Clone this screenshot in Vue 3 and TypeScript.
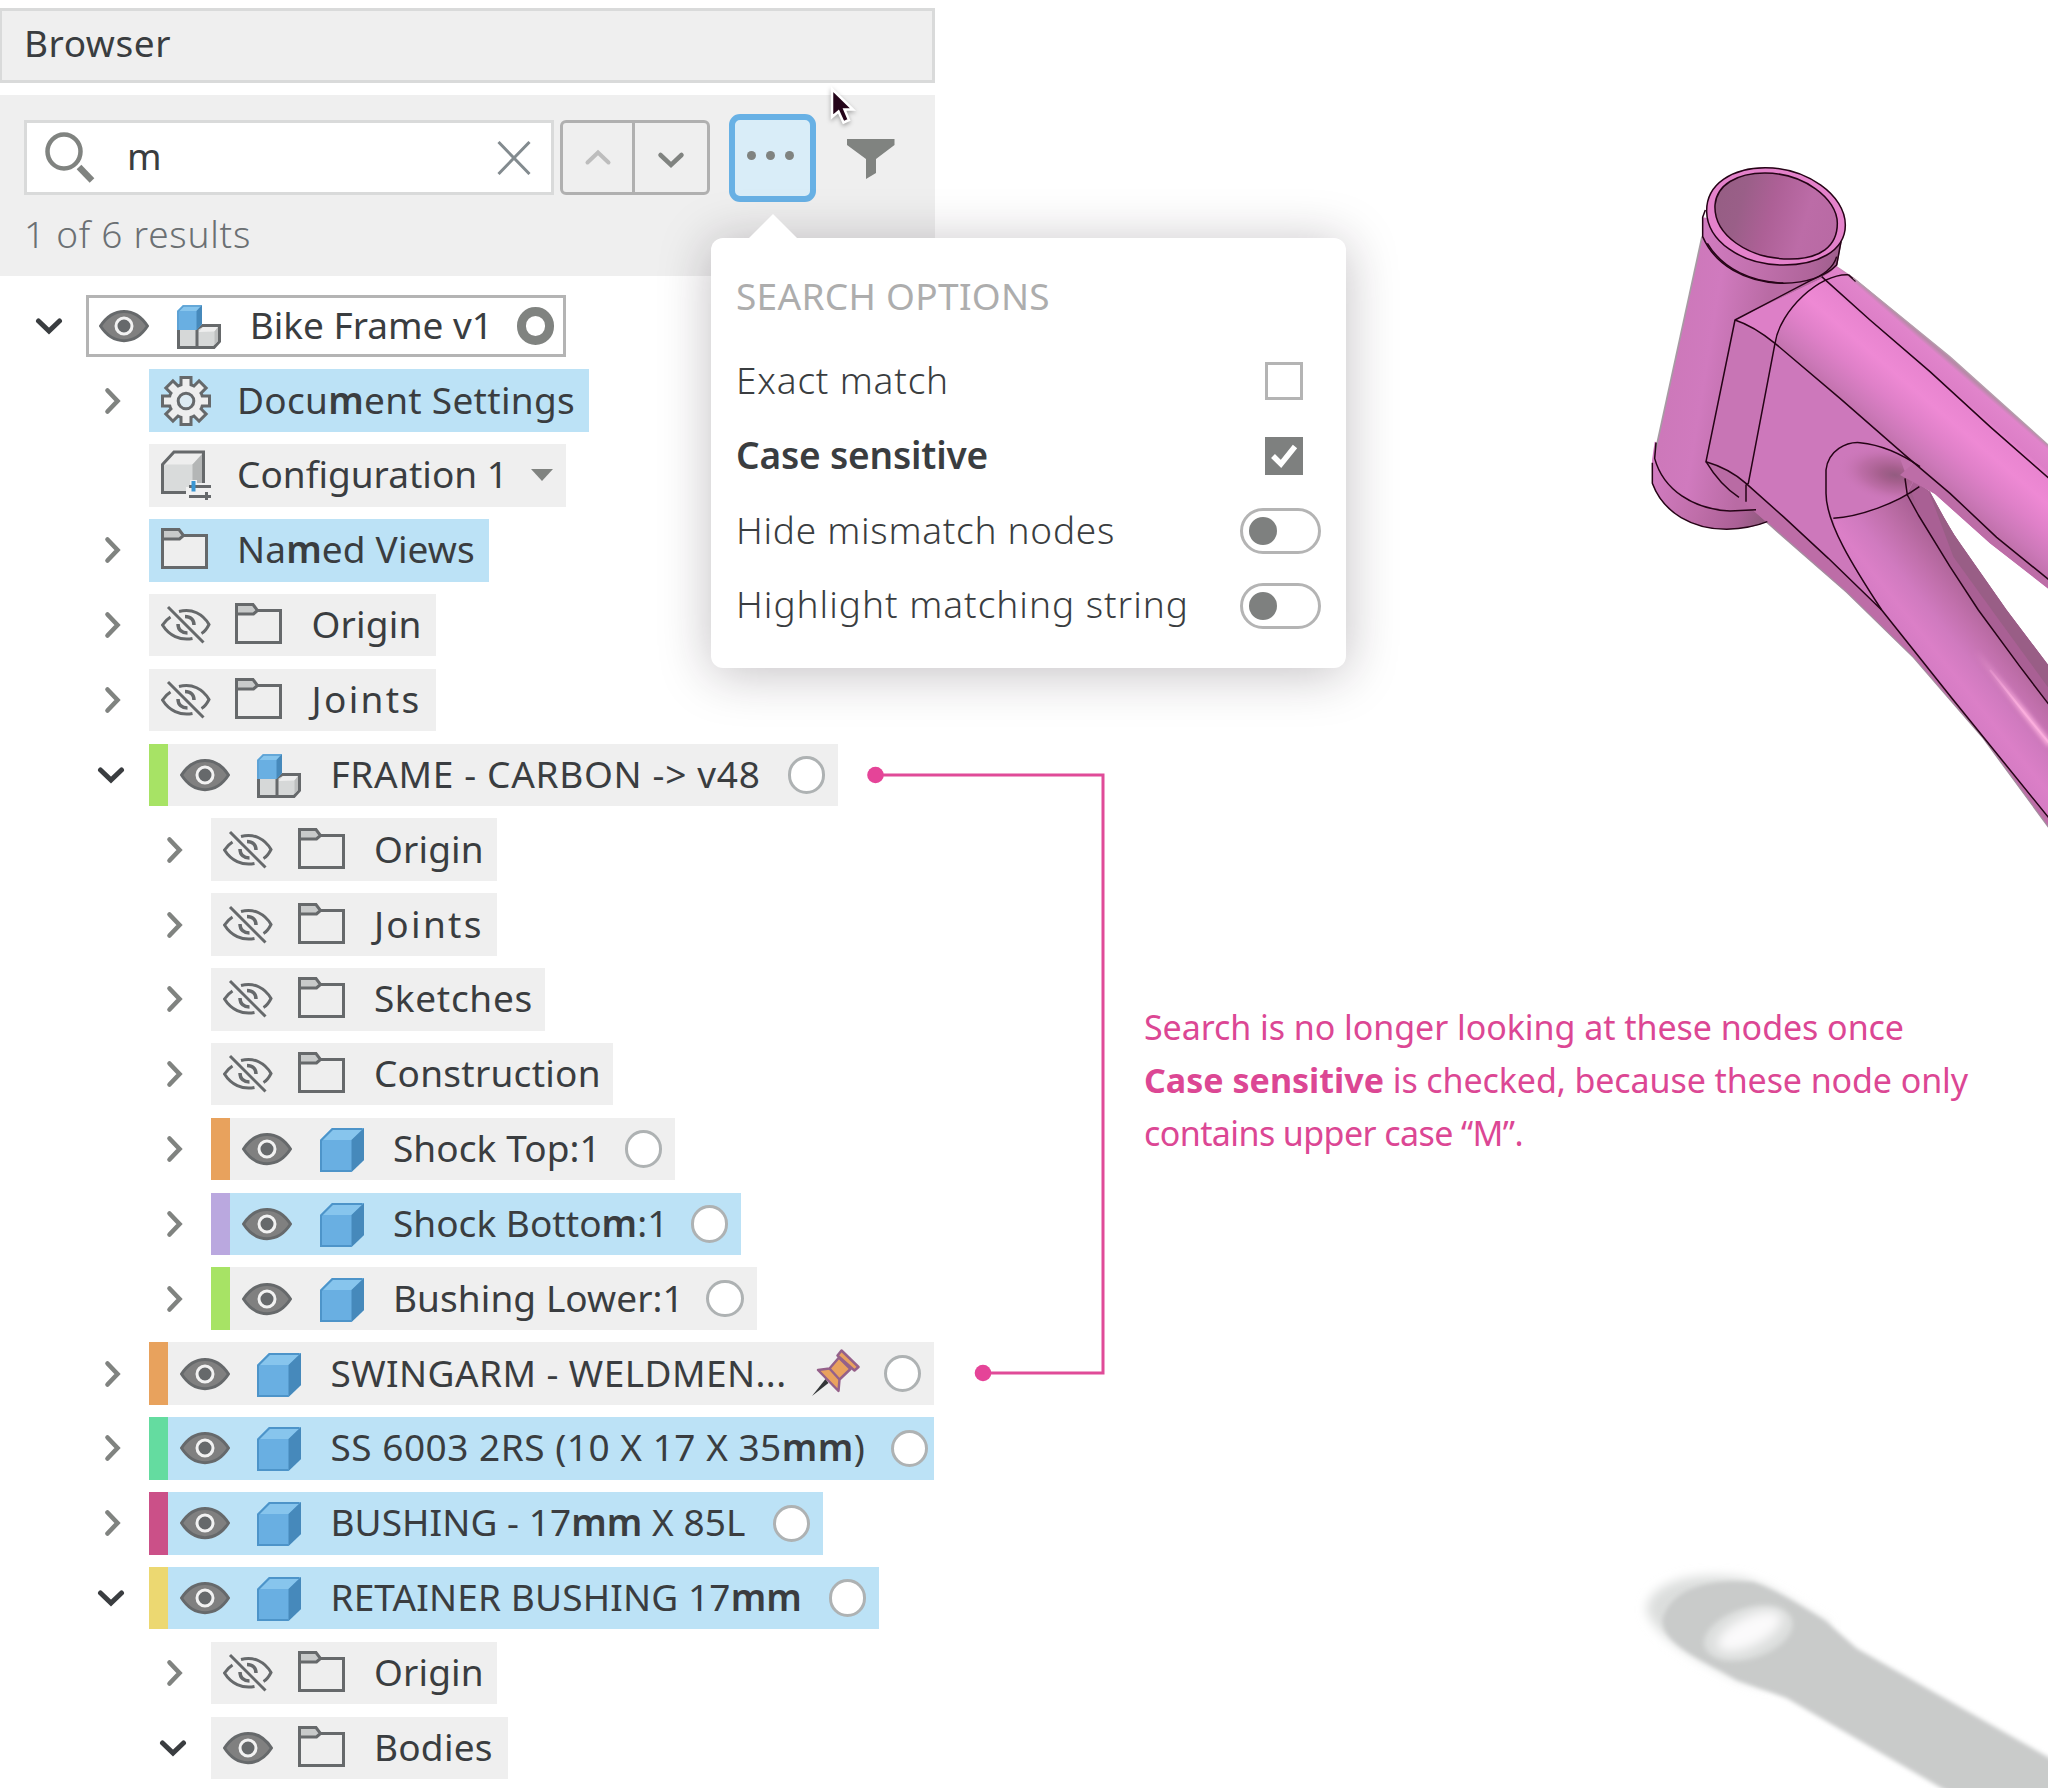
<script setup lang="ts">
import { computed } from 'vue'

type IconKind = 'assembly' | 'gear' | 'config' | 'folder' | 'cube'

interface TreeNode {
  level: number
  label: string
  textWidth: number
  width: number
  icon: IconKind
  open?: boolean
  leaf?: boolean
  eye?: 'on' | 'off'
  bar?: string
  match?: boolean
  radio?: boolean
  root?: boolean
  caret?: boolean
  pin?: boolean
  tight?: boolean
}

const nodes: TreeNode[] = [
  { level: 0, label: 'Bike Frame v1', textWidth: 243, width: 480, icon: 'assembly', open: true, eye: 'on', root: true },
  { level: 1, label: 'Docu*m*ent Settings', textWidth: 338, width: 440, icon: 'gear', match: true },
  { level: 1, label: 'Configuration 1', textWidth: 271, width: 417.5, icon: 'config', leaf: true, caret: true },
  { level: 1, label: 'Na*m*ed Views', textWidth: 238, width: 340.5, icon: 'folder', match: true },
  { level: 1, label: 'Origin', textWidth: 110, width: 287.5, icon: 'folder', eye: 'off' },
  { level: 1, label: 'Joints', textWidth: 110, width: 287.5, icon: 'folder', eye: 'off' },
  { level: 1, label: 'FRAME - CARBON -> v48', textWidth: 430, width: 689.5, icon: 'assembly', open: true, eye: 'on', bar: '#a7e365', radio: true },
  { level: 2, label: 'Origin', textWidth: 110, width: 286, icon: 'folder', eye: 'off' },
  { level: 2, label: 'Joints', textWidth: 110, width: 286, icon: 'folder', eye: 'off' },
  { level: 2, label: 'Sketches', textWidth: 159, width: 333.5, icon: 'folder', eye: 'off' },
  { level: 2, label: 'Construction', textWidth: 227, width: 401.5, icon: 'folder', eye: 'off' },
  { level: 2, label: 'Shock Top:1', textWidth: 208, width: 464, icon: 'cube', eye: 'on', bar: '#e8a25d', radio: true },
  { level: 2, label: 'Shock Botto*m*:1', textWidth: 275.5, width: 530, icon: 'cube', eye: 'on', bar: '#baa8df', match: true, radio: true },
  { level: 2, label: 'Bushing Lower:1', textWidth: 291, width: 545.5, icon: 'cube', eye: 'on', bar: '#a7e365', radio: true },
  { level: 1, label: 'SWINGARM - WELDMEN...', textWidth: 456, width: 785.5, icon: 'cube', eye: 'on', bar: '#e8a25d', radio: true, pin: true },
  { level: 1, label: 'SS 6003 2RS (10 X 17 X 35*mm*)', textWidth: 535, width: 785.5, icon: 'cube', eye: 'on', bar: '#64dca0', match: true, radio: true, tight: true },
  { level: 1, label: 'BUSHING - 17*mm* X 85L', textWidth: 415, width: 674.5, icon: 'cube', eye: 'on', bar: '#cb5088', match: true, radio: true },
  { level: 1, label: 'RETAINER BUSHING 17*mm*', textWidth: 471.5, width: 730.5, icon: 'cube', eye: 'on', bar: '#ecd871', open: true, match: true, radio: true },
  { level: 2, label: 'Origin', textWidth: 110, width: 286, icon: 'folder', eye: 'off' },
  { level: 2, label: 'Bodies', textWidth: 119, width: 296.5, icon: 'folder', eye: 'on', open: true },
]

// Text between asterisks is the part of the label that matches the query.
const rows = computed(() =>
  nodes.map((node) => ({
    ...node,
    parts: node.label.split('*').map((text, i) => ({ text, hit: i % 2 === 1 })),
  })),
)

const options = [
  { label: 'Exact match', textWidth: 213, kind: 'check', on: false },
  { label: 'Case sensitive', textWidth: 252, kind: 'check', on: true },
  { label: 'Hide mismatch nodes', textWidth: 379, kind: 'toggle', on: false },
  { label: 'Highlight matching string', textWidth: 453, kind: 'toggle', on: false },
]

// Tracks a label out so that it fills the given width.
const vFit = {
  mounted(el: HTMLElement, binding: { value: number }) {
    const count = (el.textContent ?? '').length
    const natural = el.getBoundingClientRect().width
    el.style.letterSpacing = `${(binding.value - natural) / Math.max(count, 1)}px`
  },
}

const teeth = [0, 45, 90, 135, 180, 225, 270, 315]
</script>

<template>
  <div class="screen">
    <aside class="panel">
      <header class="title"><span v-fit="147">Browser</span></header>

      <section class="search">
        <div class="controls">
          <div class="field">
            <svg class="magnifier" width="50" height="54" viewBox="0 0 50 54">
              <ellipse cx="19" cy="20.500" rx="16.500" ry="17" fill="none" stroke="#808380" stroke-width="4.500" />
              <path d="M34 36 L47 49.500" stroke="#808380" stroke-width="6.500" />
            </svg>
            <span class="query">m</span>
            <svg class="clear" width="34" height="34" viewBox="0 0 34 34">
              <path d="M1.500 1 L32.500 33 M32.500 1 L1.500 33" stroke="#838b8f" stroke-width="3" />
            </svg>
          </div>
          <div class="stepper">
            <div class="step prev">
              <svg width="28" height="18" viewBox="0 0 28 18"><path d="M3.500 13.500 L14 3.500 L24.500 13.500" fill="none" stroke="#bdbdbd" stroke-width="4" stroke-linecap="round" /></svg>
            </div>
            <div class="step next">
              <svg width="28" height="18" viewBox="0 0 28 18"><path d="M3.500 4 L14 14 L24.500 4" fill="none" stroke="#808380" stroke-width="4.500" stroke-linecap="round" /></svg>
            </div>
          </div>
          <div class="more"><i /><i /><i /></div>
          <svg class="filter" width="48" height="41" viewBox="0 0 48 41">
            <path d="M0 0 H47.500 V6 L29 20 V34 L19 40 V20 L0 6Z" fill="#808380" />
          </svg>
        </div>
        <div class="count"><span v-fit="227">1 of 6 results</span></div>
      </section>

      <ul class="tree">
        <li v-for="(row, i) in rows" :key="i" class="row" :class="'level' + row.level">
          <span class="chevron">
            <svg v-if="row.open" width="28" height="18" viewBox="0 0 28 18"><path d="M3.500 4 L14 14 L24.500 4" fill="none" stroke="#3a3d40" stroke-width="5" stroke-linecap="round" /></svg>
            <svg v-else-if="!row.leaf" class="closed" width="18" height="28" viewBox="0 0 18 28"><path d="M4.500 3.500 L14.500 14 L4.500 24.500" fill="none" stroke="#808380" stroke-width="4.600" stroke-linecap="round" /></svg>
          </span>

          <div class="node" :class="{ match: row.match, root: row.root, tight: row.tight }" :style="{ width: row.width + 'px' }">
            <span v-if="row.bar" class="bar" :style="{ background: row.bar }" />

            <svg v-if="row.eye === 'on'" class="eye" width="50" height="50" viewBox="0 0 50 50">
              <path d="M1.500 25 C14 5.500 36 5.500 48.500 25 C36 44.500 14 44.500 1.500 25Z" fill="#808080" stroke="#66696b" stroke-width="3" stroke-linejoin="round" />
              <circle cx="25" cy="25" r="8" fill="#66696b" stroke="#f2f2f2" stroke-width="3" />
            </svg>
            <svg v-else-if="row.eye === 'off'" class="eye" width="50" height="50" viewBox="0 0 50 50">
              <g fill="none" stroke="#66696b" stroke-width="3">
                <path d="M18 11.500 C31 8 42 14 48 24.500 C46 28.500 44 31.500 40.500 33.500" />
                <path d="M9.500 17 C5.500 19.500 3.500 22 1.500 25 C8 35.500 19 41 31.500 38.500" />
                <path d="M24 16.500 C29.500 16.500 33 20 33 25" stroke-width="3.500" />
                <path d="M17 24 C17 30 21 33 26.500 33" stroke-width="3.500" />
                <path d="M7 7 L42.500 42.500" />
              </g>
            </svg>

            <svg class="icon" width="50" height="50" viewBox="0 0 50 50">
              <g v-if="row.icon === 'folder'" stroke="#66696b" stroke-width="3">
                <path d="M1.500 10.500 H45.500 V42.500 H1.500Z" fill="#eeeeee" />
                <path d="M1.500 4.500 H18 L22.500 10.500 L18.500 14 H1.500Z" fill="#c8caca" />
              </g>
              <g v-else-if="row.icon === 'cube'">
                <path d="M3 16 L15 4 H47 V36 L34.500 48 H3Z" fill="#69afe2" />
                <path d="M3 16 L15 4 H47 L34.500 16Z" fill="#87c5ed" />
                <path d="M34.500 16 L47 4 V36 L34.500 48Z" fill="#4689bb" />
                <path d="M4 16.500 L15.500 5 H45.500 M4 16 V47 H34.500" fill="none" stroke="#4d94c9" stroke-width="2" />
              </g>
              <g v-else-if="row.icon === 'assembly'" transform="translate(3 4)">
                <path d="M1.500 23 H21 L25.500 20.500 H42.500 V36.500 L37 42.500 H1.500Z" fill="#d6d8d8" stroke="#66696b" stroke-width="3" />
                <path d="M21.500 27 L26 22 H41 L37.500 26.500Z" fill="#eeeeee" />
                <path d="M37.500 26.500 L41 22 V36 L37.500 40Z" fill="#bdbfbf" />
                <path d="M20 24 V42" stroke="#66696b" stroke-width="3" />
                <path d="M0 6 L6 0 H25 V19 L19.500 25 H0Z" fill="#69afe2" />
                <path d="M0 6 L6 0 H25 L19.500 6Z" fill="#87c5ed" />
                <path d="M19.500 6 L25 0 V19 L19.500 25Z" fill="#4689bb" />
                <path d="M1 25 V6.500 L6.500 1 H24" fill="none" stroke="#5b9fd1" stroke-width="1.500" />
              </g>
              <g v-else-if="row.icon === 'gear'">
                <g fill="#66696b">
                  <circle cx="25" cy="25" r="18.500" />
                  <rect v-for="a in teeth" :key="'o' + a" x="18.500" y="0" width="13" height="12" :transform="`rotate(${a} 25 25)`" />
                </g>
                <g fill="#eeeeee">
                  <circle cx="25" cy="25" r="15.500" />
                  <rect v-for="a in teeth" :key="'i' + a" x="21.500" y="3" width="7" height="12" :transform="`rotate(${a} 25 25)`" />
                </g>
                <circle cx="25" cy="25" r="7.800" fill="#dcebf3" stroke="#66696b" stroke-width="3" />
              </g>
              <g v-else>
                <path d="M1.500 14.500 L13 2 H42.500 V42.500 H1.500Z" fill="#d9dbdb" />
                <path d="M3 14.500 L13.500 3 H42 L31.500 14.500Z" fill="#eeeeee" />
                <path d="M31.500 14.500 L42 3 V33 L31.500 42Z" fill="#b4b6b6" />
                <path d="M1.500 14.500 L13 2 H42.500 V42.500 H1.500Z" fill="none" stroke="#66696b" stroke-width="3" />
                <path d="M25 37 H29 V30 H36 V33 H50 V50 H25Z" fill="#f1f1f1" />
                <path d="M28 36.500 H50 M28 46.500 H50 M45.500 42 V52" stroke="#66696b" stroke-width="3" />
                <path d="M32.500 31 V41.500" stroke="#3b97d3" stroke-width="4" />
              </g>
            </svg>

            <span class="label" v-fit="row.textWidth"><template v-for="(part, p) in row.parts" :key="p"><b v-if="part.hit">{{ part.text }}</b><template v-else>{{ part.text }}</template></template></span>

            <svg v-if="row.caret" class="caret" width="22" height="12" viewBox="0 0 22 12"><path d="M0 0 H22 L11 12Z" fill="#808380" /></svg>
            <svg v-if="row.pin" class="pin" width="50" height="50" viewBox="0 0 50 50">
              <path d="M14.500 30 L1 47 L17.500 34Z" fill="#333638" />
              <path d="M7 21 L18.500 19.500 L28 8.500 L39.500 20 L28.500 30.500 L27.500 42Z" fill="#e9a25e" stroke="#95618a" stroke-width="2.500" stroke-linejoin="round" />
              <path d="M30.500 1.500 L47.500 18 L43.500 21.500 L26.500 6.500Z" fill="#e9a25e" stroke="#95618a" stroke-width="2.500" stroke-linejoin="round" />
              <path d="M18.500 19.500 L28.500 30.500" stroke="#95618a" stroke-width="2.500" />
            </svg>
            <span v-if="row.radio" class="radio" />
            <span v-if="row.root" class="radio active" />
          </div>
        </li>
      </ul>
    </aside>

    <main class="canvas">
      <svg class="model" width="448" height="1788" viewBox="1600 0 448 1788">
        <defs>
          <linearGradient id="head" gradientUnits="userSpaceOnUse" x1="170" y1="600" x2="420" y2="640">
            <stop offset="0" stop-color="#cd78ba" /><stop offset=".4" stop-color="#d07abe" /><stop offset="1" stop-color="#b96ba4" />
          </linearGradient>
          <linearGradient id="bore" gradientUnits="userSpaceOnUse" x1="290" y1="180" x2="640" y2="280">
            <stop offset="0" stop-color="#965e84" /><stop offset=".2" stop-color="#9a5f88" /><stop offset=".45" stop-color="#ad6096" /><stop offset=".75" stop-color="#bc6ca7" /><stop offset="1" stop-color="#b96aa4" />
          </linearGradient>
          <linearGradient id="collar" gradientUnits="userSpaceOnUse" x1="250" y1="300" x2="660" y2="380">
            <stop offset="0" stop-color="#d17bc0" /><stop offset=".4" stop-color="#c271ae" /><stop offset=".8" stop-color="#b0659b" /><stop offset="1" stop-color="#9c5e8a" />
          </linearGradient>
          <linearGradient id="foot" gradientUnits="userSpaceOnUse" x1="100" y1="1020" x2="430" y2="1140">
            <stop offset="0" stop-color="#d17bc0" /><stop offset=".45" stop-color="#bf6ea9" /><stop offset=".8" stop-color="#ab6096" /><stop offset="1" stop-color="#905b7e" />
          </linearGradient>
          <linearGradient id="top" gradientUnits="userSpaceOnUse" x1="860" y1="950" x2="1058" y2="719">
            <stop offset="0" stop-color="#c272ad" /><stop offset=".12" stop-color="#cd79b9" /><stop offset=".32" stop-color="#df80c8" /><stop offset=".55" stop-color="#ee89d4" /><stop offset=".76" stop-color="#e884cf" /><stop offset=".8" stop-color="#dd7fc7" /><stop offset=".96" stop-color="#e184cb" /><stop offset="1" stop-color="#b98aa9" />
          </linearGradient>
          <linearGradient id="down" gradientUnits="userSpaceOnUse" x1="880" y1="1550" x2="1125" y2="1355">
            <stop offset="0" stop-color="#b96ca4" /><stop offset=".06" stop-color="#d67cc4" /><stop offset=".2" stop-color="#db7fc7" /><stop offset=".4" stop-color="#d07abf" /><stop offset=".62" stop-color="#c170ac" /><stop offset=".78" stop-color="#b4689e" /><stop offset=".9" stop-color="#ab6096" /><stop offset="1" stop-color="#935d80" />
          </linearGradient>
          <radialGradient id="dent" gradientUnits="userSpaceOnUse" cx="0" cy="0" r="1" gradientTransform="translate(825 1005) rotate(10) scale(175 85)">
            <stop offset="0" stop-color="#935b80" /><stop offset=".25" stop-color="#a55f8d" /><stop offset=".6" stop-color="#bb6ca5" stop-opacity=".9" /><stop offset="1" stop-color="#cd78bb" stop-opacity="0" />
          </radialGradient>
          <filter id="soft" x="-20%" y="-20%" width="140%" height="140%"><feGaussianBlur stdDeviation="7" /></filter>
          <filter id="haze" x="-30%" y="-30%" width="160%" height="160%"><feGaussianBlur stdDeviation="16" /></filter>
          <filter id="glow" x="-30%" y="-30%" width="160%" height="160%"><feGaussianBlur stdDeviation="8" /></filter>
          <linearGradient id="glint" gradientUnits="userSpaceOnUse" x1="1065" y1="1530" x2="1200" y2="1720">
            <stop offset="0" stop-color="#f3a2d8" stop-opacity="0" /><stop offset="1" stop-color="#fbaedd" />
          </linearGradient>
        </defs>

        <g transform="translate(1620 140) scale(.333333)">
          <path d="M104 905 L96 960 V1030 C130 1120 220 1168 320 1168 C375 1166 410 1158 442 1145 L400 1100 L380 1040 L300 940Z" fill="url(#foot)" />
          <path d="M246 290 L107 930 C120 1030 210 1108 330 1112 L405 1108 L470 640 L640 400Z" fill="url(#head)" />
          <path d="M246 290 L107 930" fill="none" stroke="#a79aa3" stroke-width="5" />

          <path d="M856 1000 L930 1055 C960 1110 985 1160 1020 1210 L1160 1410 L1290 1582 V2068 L1090 1795 L880 1552 L680 1357 L440 1147 L380 1090 L470 1000Z" fill="url(#down)" />
          <path d="M856 1010 L930 1055 C960 1110 985 1160 1020 1210 L1160 1410 L1290 1582 V1698 L1200 1580 L1075 1410 L990 1280 L895 1110Z" fill="#a96094" />
          <path d="M925 1050 C960 1110 985 1160 1020 1210 L1160 1410 L1290 1582 V1650 L1130 1430 L1000 1250Z" fill="#945d82" opacity=".75" />

          <path d="M258 965 L345 540 L610 415 L900 900 L900 985 L860 1065 C790 1110 700 1135 640 1135 C655 1220 720 1320 785 1410 L625 1255 L490 1130 L378 1030Z" fill="#cd78bb" />
          <path d="M378 1030 L490 1130 L625 1255 L785 1410 L1000 1680 L1290 2038 V2068 L1090 1795 L880 1552 L680 1357 L440 1147 L380 1095 L258 965Z" fill="#bd6da7" />
          <path d="M440 1147 L680 1357 L880 1552 L1090 1795 L1290 2068" fill="none" stroke="#a58d9f" stroke-width="4" />
          <path d="M618 1060 V990 C625 930 680 905 720 908 C790 915 850 945 900 980 L860 1065 C790 1110 700 1135 640 1135Z" fill="url(#dent)" />

          <path d="M345 540 L600 418 L650 378 L700 412 L990 650 L1290 920 V1350 L1110 1210 L945 1062 L860 1010 L840 955 L860 950 L660 775 L465 610Z" fill="url(#top)" />
          <path d="M345 540 L600 418 C540 470 490 530 465 610Z" fill="#dd7fc7" />
          <path d="M345 540 L400 562 L465 610 L385 1030 L258 965Z" fill="#c674b3" opacity=".75" />
          <path d="M840 1005 L945 1062 L1110 1210 L1290 1350 V1322 L1130 1192 L990 1060 L880 970Z" fill="#bd6da7" />
          <path d="M258 965 C300 975 340 1000 378 1030 L380 1090 L357 1072 C320 1045 290 1020 258 965Z" fill="#b96ba4" />

          <path d="M1065 1530 C1120 1600 1200 1700 1290 1815" fill="none" stroke="url(#glint)" stroke-width="16" filter="url(#soft)" />
          <path d="M1110 1590 C1160 1650 1220 1730 1290 1812" fill="none" stroke="url(#glint)" stroke-width="6" />

          <path d="M248 232 V295 C285 375 375 428 490 430 C570 428 625 412 652 375 L665 305Z" fill="url(#collar)" />
          <path d="M260 215 C258 130 340 82 436 82 C560 82 677 165 677 255 C677 335 590 375 490 375 C360 375 262 300 260 215Z" fill="#e482cb" />
          <path d="M285 195 C290 135 350 99 435 99 C550 99 652 175 652 250 C652 320 600 357 510 357 C385 357 280 285 285 195Z" fill="url(#bore)" />

          <g fill="none" stroke="#250416" stroke-width="4.500" stroke-linejoin="round">
            <path d="M260 215 C258 130 340 83 436 83 C560 83 676 165 676 255 C676 335 590 375 490 375 C360 375 262 300 260 215Z" />
            <path d="M285 195 C290 135 350 99 435 99 C550 99 652 175 652 250 C652 320 600 357 510 357 C385 357 280 285 285 195Z" />
            <path d="M256 210 L248 232 V290 C285 375 375 428 490 430 C570 428 620 405 650 375 L663 305" />
            <path d="M262 310 C310 390 400 427 490 429" />
            <path d="M650 350 C640 385 610 405 565 425 L345 540 L258 965 C310 980 350 1005 378 1030 L490 1130 L625 1255 L785 1410 L1000 1680 L1290 2038" />
            <path d="M345 540 C400 558 440 590 465 610 L660 775 L860 950 L990 1060 L1130 1192 L1290 1322" />
            <path d="M685 404 C600 400 480 510 465 610 L385 1030 L378 1035 V1085" />
            <path d="M605 410 L750 540 L930 695 L1110 860 L1290 1018" />
            <path d="M685 404 L707 424" />
            <path d="M258 965 C285 1010 315 1045 357 1072" />
            <path d="M108 908 L104 955 C130 1050 220 1108 330 1113 L408 1109" />
            <path d="M97 968 V1030 C130 1120 220 1168 320 1168 C375 1166 410 1158 442 1145" />
            <path d="M785 1410 C700 1280 618 1150 618 1060 V990 C625 930 680 905 720 908 C790 915 850 945 900 980" />
            <path d="M640 1135 C720 1130 830 1090 898 1040" />
            <path d="M855 1015 L862 1065 L895 1125 L990 1280 L1075 1410 L1200 1580 L1290 1698" />
          </g>
          <path d="M700 414 L990 650 L1290 920" fill="none" stroke="#b59dac" stroke-width="4" />
        </g>

        <g transform="translate(1600 1540) scale(.333333)">
          <path d="M140 215 C140 120 300 92 430 115 C520 140 600 205 690 255 L500 440 L420 420 C320 370 180 310 140 215Z" fill="#dcdedd" filter="url(#haze)" />
          <path d="M190 230 C220 140 340 115 460 127 C530 150 600 195 680 245 L770 325 L1360 660 V800 H1120 L560 475 L410 420 C330 370 170 310 190 230Z" fill="#c9cbca" filter="url(#soft)" />
          <ellipse cx="445" cy="280" rx="138" ry="76" fill="#dcdedd" transform="rotate(-17 445 280)" filter="url(#glow)" />
          <ellipse cx="448" cy="274" rx="105" ry="44" fill="#fbfafb" transform="rotate(-26 448 274)" filter="url(#haze)" />
        </g>
      </svg>

      <svg class="connector" width="248" height="620" viewBox="0 0 248 620">
        <path d="M16 11 H240 V609 H120" fill="none" stroke="#e04b98" stroke-width="3" />
        <circle cx="12.500" cy="11" r="8.300" fill="#e54498" /><circle cx="120" cy="609" r="8.300" fill="#e54498" />
      </svg>

      <p class="note">
        <span class="line"><span v-fit="760">Search is no longer looking at these nodes once</span></span>
        <span class="line"><b v-fit="240">Case sensitive</b><span v-fit="584"> is checked, because these node only</span></span>
        <span class="line"><span v-fit="379">contains upper case “M”.</span></span>
      </p>
    </main>

    <section class="popover">
      <h2><span v-fit="314">SEARCH OPTIONS</span></h2>
      <div v-for="option in options" :key="option.label" class="option" :class="{ on: option.on }">
        <span v-fit="option.textWidth">{{ option.label }}</span>
        <span v-if="option.kind === 'check'" class="check" :class="{ checked: option.on }">
          <svg v-if="option.on" width="37" height="37" viewBox="0 0 37 37"><path d="M8 19 L16 27 L30 9.500" fill="none" stroke="#fff" stroke-width="5.500" /></svg>
        </span>
        <span v-else class="toggle"><i /></span>
      </div>
    </section>

    <svg class="cursor" width="30" height="42" viewBox="0 0 30 42">
      <path d="M3 3 V31 L9.500 25.500 L14.500 36.500 L20 34 L15.500 23.500 H24Z" fill="#25051a" stroke="#fff" stroke-width="2.500" />
    </svg>
  </div>
</template>

<style>
body {
  background: #fff;
}
</style>

<style scoped>
.screen {
  position: relative;
  display: flex;
  width: 2048px;
  height: 1788px;
  overflow: hidden;
  background: #fff;
  color: #3a3d40;
  font-family: 'Noto Sans', 'Open Sans', sans-serif;
  font-size: 37px;
  font-weight: 450;
  white-space: pre;
}

.screen * {
  box-sizing: border-box;
}

.panel {
  width: 935px;
  padding-top: 8px;
  flex: none;
}

.title {
  display: flex;
  align-items: center;
  height: 75px;
  padding: 0 0 6px 22px;
  border: 3px solid #d9dada;
  border-left-width: 2px;
  background: #efefef;
}

.search {
  height: 181px;
  margin-top: 12px;
  padding: 19px 0 0 24px;
  background: #efefef;
}

.controls {
  display: flex;
  align-items: center;
  height: 88px;
}

.field {
  display: flex;
  align-items: center;
  width: 530px;
  height: 75px;
  margin-top: -1px;
  padding: 0 20px 0 18px;
  border: 3px solid #d9dada;
  background: #fff;
}

.query {
  margin: -3px auto 0 32px;
  line-height: 60px;
}

.stepper {
  display: flex;
  width: 150px;
  height: 75px;
  margin: -1px 0 0 6px;
  border: 3px solid #b0b0b0;
  border-radius: 6px;
}

.step {
  display: flex;
  flex: 1;
  align-items: center;
  justify-content: center;
}

.prev {
  flex: none;
  width: 69px;
}

.next {
  border-left: 3px solid #b0b0b0;
}

.next svg {
  margin-top: 5px;
}

.more {
  display: flex;
  align-items: center;
  justify-content: center;
  gap: 9.5px;
  width: 87px;
  height: 88px;
  margin: -1px 0 0 19px;
  padding: 0 4px 4px 0;
  border: 6px solid #68b1e5;
  border-radius: 11px;
  background: #d9edf8;
}

.more i {
  width: 9.5px;
  height: 9.5px;
  border-radius: 50%;
  background: #808380;
}

.filter {
  margin: 2px 0 0 31px;
}

.count {
  margin-top: 7px;
  color: #6b7073;
  font-weight: 350;
  line-height: 50px;
}

.tree {
  margin: 18.5px 0 0;
  padding: 0;
  list-style: none;
}

.row {
  display: flex;
  height: 74.85px;
}

.level0 {
  padding-left: 23.6px;
}

.level1 {
  padding-left: 86px;
}

.level2 {
  padding-left: 148.4px;
}

.chevron {
  display: flex;
  flex: none;
  align-items: center;
  justify-content: center;
  width: 50px;
  height: 62.5px;
  margin-right: 12.7px;
}

.chevron .closed {
  margin-left: 2px;
}

.node {
  display: flex;
  flex: none;
  align-items: center;
  height: 62.5px;
  padding: 0 13px 0 12.3px;
  background: #efefef;
}

.node.match {
  background: #bce2f6;
}

.node.root {
  padding: 0 9px 0 10px;
  border: 3px solid #b4b4b4;
  background: #fff;
}

.node.tight {
  padding-right: 6px;
}

.bar {
  align-self: stretch;
  width: 19px;
  margin: 0 12.3px 0 -12.3px;
}

.node > svg {
  flex: none;
}

.eye {
  margin-right: 24.5px;
}

.icon {
  margin-right: 26px;
}

.label {
  flex: none;
  padding-bottom: 2px;
  line-height: 56px;
}

.label b {
  font-weight: 600;
}

.caret {
  margin-left: auto;
}

.pin {
  margin-left: auto;
}

.radio {
  flex: none;
  width: 37.5px;
  height: 37.5px;
  margin-left: auto;
  border: 3px solid #aeb2b3;
  border-radius: 50%;
  background: #fff;
}

.pin + .radio {
  margin-left: 23px;
}

.radio.active {
  border: 9.5px solid #808380;
}

.canvas {
  position: relative;
  flex: 1;
}

.model {
  position: absolute;
  top: 0;
  right: 0;
}

.connector {
  position: absolute;
  top: 764px;
  left: -72px;
}

.note {
  position: absolute;
  top: 1001px;
  left: 209px;
  margin: 0;
  color: #dc4794;
  font-size: 34px;
  font-weight: 400;
}

.line {
  display: flex;
  height: 52.9px;
  line-height: 52.9px;
}

.line b {
  font-weight: 750;
}

.popover {
  position: absolute;
  top: 238px;
  left: 711px;
  width: 635px;
  height: 430px;
  padding: 27px 25px 0 25px;
  border-radius: 12px;
  background: #fff;
  box-shadow: 0 5px 52px rgba(30, 20, 30, 0.27);
}

.popover::before {
  content: '';
  position: absolute;
  top: -24px;
  left: 37px;
  border: 25px solid transparent;
  border-top: 0;
  border-bottom: 25px solid #fff;
}

.popover h2 {
  margin: 0 0 17px;
  color: #adadad;
  font-size: 37px;
  font-weight: 400;
  line-height: 62px;
}

.option {
  display: flex;
  align-items: center;
  justify-content: space-between;
  height: 74.85px;
  font-weight: 350;
}

.option > span:first-child {
  margin-top: -4px;
}

.option.on {
  font-weight: 600;
}

.check {
  width: 38px;
  height: 38px;
  margin-right: 18px;
  border: 3px solid #b4b4b4;
}

.check.checked {
  border: 0;
  background: #7e807f;
}

.check svg {
  display: block;
}

.toggle {
  display: flex;
  align-items: center;
  width: 81px;
  height: 46px;
  padding-left: 6px;
  border: 3px solid #b4b4b4;
  border-radius: 23px;
}

.toggle i {
  width: 28px;
  height: 28px;
  border-radius: 50%;
  background: #7e807f;
}

.cursor {
  position: absolute;
  top: 86px;
  left: 829px;
  filter: drop-shadow(0 2px 2px rgba(0, 0, 0, 0.3));
}
</style>
